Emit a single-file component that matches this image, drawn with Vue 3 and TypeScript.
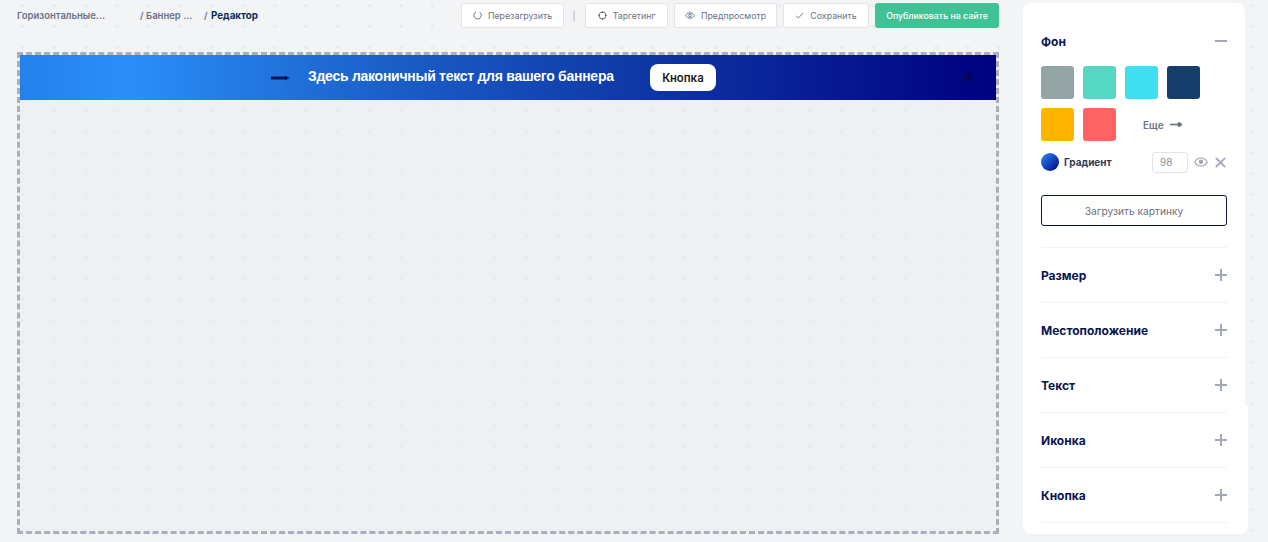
<script setup lang="ts">
const swatches: string[] = ['#95a5a6', '#55d8c1', '#3edff0', '#153e6b', '#ffb400', '#ff6363']
const sections: string[] = ['Размер', 'Местоположение', 'Текст', 'Иконка', 'Кнопка']
</script>

<template>
  <div class="page">
    <main class="workspace">
      <header class="topbar">
        <nav class="crumbs">
          <span class="crumb first">Горизонтальные...</span>
          <span class="crumb second">/ Баннер ...</span>
          <span class="crumb third">/ <b>Редактор</b></span>
        </nav>
        <div class="actions">
          <button class="btn reload">
            <svg width="9" height="9" viewBox="0 0 9 9" fill="none" stroke="#6b7186" stroke-width="1"><path d="M6.6 1.2A3.7 3.7 0 1 1 3 1" /></svg>
            Перезагрузить
          </button>
          <span class="sep"></span>
          <button class="btn target">
            <svg width="9" height="9" viewBox="0 0 9 9" fill="none" stroke="#6b7186" stroke-width="1"><circle cx="4.5" cy="4.5" r="3.5" /><path d="M4.5 0v2M4.5 7v2M0 4.5h2M7 4.5h2" /></svg>
            Таргетинг
          </button>
          <button class="btn preview">
            <svg width="10" height="9" viewBox="0 0 10 9" fill="none" stroke="#6b7186" stroke-width="1"><path d="M0.6 4.6C1.8 2.8 3.2 2 5 2S8.2 2.8 9.4 4.6C8.2 6.4 6.8 7.2 5 7.2S1.8 6.4 0.6 4.6Z" /><circle cx="5" cy="4.6" r="1.3" /><path d="M2.6 1.4 3 2M5 0.6v1M7.4 1.4 7 2" stroke-width="0.7" /></svg>
            Предпросмотр
          </button>
          <button class="btn save">
            <svg width="9" height="9" viewBox="0 0 9 9" fill="none" stroke="#6b7186" stroke-width="0.9"><path d="M1 4.8 3.4 7 8 2" /></svg>
            Сохранить
          </button>
          <button class="btn publish">Опубликовать на сайте</button>
        </div>
      </header>

      <section class="canvas">
        <div class="banner">
          <svg class="banner-arrow" width="19" height="6" viewBox="0 0 19 6"><path d="M0 1.4h14V0.4l4.6 2.6L14 5.6V4.6H0Z" fill="#0a1550" /></svg>
          <span class="banner-text">Здесь лаконичный текст для вашего баннера</span>
          <button class="banner-btn">Кнопка</button>
          <svg class="banner-close" width="10" height="10" viewBox="0 0 10 10" fill="none" stroke="#0a0a2a" stroke-width="1.6"><path d="M1 1l8 8M9 1 1 9" /></svg>
        </div>
      </section>
    </main>

    <aside class="panel">
      <div class="group open">
        <div class="group-head">
          <span>Фон</span>
          <svg width="12" height="12" viewBox="0 0 12 12" stroke="#a3a8b8" stroke-width="2"><path d="M0 6h12" /></svg>
        </div>
        <div class="swatches">
          <span v-for="c in swatches" :key="c" class="swatch" :style="{ background: c }"></span>
          <span class="more">
            Еще
            <svg width="13" height="7" viewBox="0 0 13 7"><path d="M0 2.7h7v1.6H0Z" fill="#6b7186" /><path d="M6.5 3.5 9 0.8l2 1.2 1.4 1.5L11 5l-2 1.2Z" fill="#6b7186" /></svg>
          </span>
        </div>
        <div class="gradient-row">
          <span class="ball"></span>
          <span class="gradient-label">Градиент</span>
          <span class="opacity">98</span>
          <svg class="eye" width="14" height="10" viewBox="0 0 14 10" fill="none" stroke="#a3a8b8"><path d="M0.8 5C2 2.4 4.2 1 7 1s5 1.4 6.2 4C12 7.6 9.8 9 7 9S2 7.6 0.8 5Z" stroke-width="1.2" /><circle cx="7" cy="4.8" r="2.2" fill="#a3a8b8" stroke="none" /></svg>
          <svg class="cross" width="11" height="11" viewBox="0 0 11 11" stroke="#a3a8b8" stroke-width="1.8"><path d="M0.8 0.8l9.4 9.4M10.2 0.8 0.8 10.2" /></svg>
        </div>
        <button class="upload">Загрузить картинку</button>
      </div>
      <div v-for="s in sections" :key="s" class="group">
        <div class="group-head">
          <span>{{ s }}</span>
          <svg width="12" height="12" viewBox="0 0 12 12" stroke="#a3a8b8" stroke-width="2"><path d="M0 6h12M6 0v12" /></svg>
        </div>
      </div>
    </aside>
  </div>
</template>

<style>
html,
body {
  margin: 0;
  height: 100%;
  overflow: hidden;
}
body {
  background-color: #f3f4f6;
  background-image: radial-gradient(circle, #e9ebef 1.5px, transparent 2px);
  background-size: 31.5px 21px;
  background-position: 7px -5px;
}
</style>

<style scoped>
.page {
  display: flex;
  width: 1268px;
  height: 542px;
  font-family: Inter, 'Noto Sans', sans-serif;
  color: #0a1550;
  box-sizing: border-box;
}
.workspace {
  width: 1023px;
  padding: 3px 24px 0 17px;
  box-sizing: border-box;
}
.topbar {
  display: flex;
  align-items: center;
  justify-content: space-between;
  height: 25px;
  margin-bottom: 24px;
}
.crumbs {
  display: flex;
  font-size: 9.5px;
  font-weight: 600;
  color: #6b7186;
}
.crumb.first {
  width: 123px;
}
.crumb.second {
  width: 64px;
}
.crumb b {
  margin-left: 1px;
  font-size: 9.8px;
  font-weight: 700;
  color: #0a2a5e;
}
.actions {
  display: flex;
  align-items: center;
  gap: 6px;
}
.btn {
  display: flex;
  align-items: center;
  justify-content: center;
  gap: 6px;
  height: 25px;
  padding: 0;
  background: #fff;
  border: 1px solid #e2e4ea;
  border-radius: 3px;
  font-family: inherit;
  font-size: 8.8px;
  color: #6b7186;
}
.reload {
  width: 103px;
}
.target {
  width: 83px;
}
.preview {
  width: 103px;
}
.save {
  width: 86px;
}
.sep {
  width: 2px;
  height: 10px;
  margin: 0 4px 0 3px;
  background: #d3d6de;
}
.publish {
  width: 124px;
  border: none;
  background: #41c295;
  color: #fff;
  font-weight: 500;
}
.canvas {
  height: 482px;
  box-sizing: border-box;
  border: 3px dashed #abaebb;
  background: rgba(232, 234, 242, 0.45);
}
.banner {
  display: flex;
  align-items: center;
  position: relative;
  height: 45px;
  padding-left: 251px;
  background: linear-gradient(90deg, #2580ea 0%, #2a8ffa 11%, #1b5ec8 38%, #0f3aa8 62%, #000080 100%);
  color: #fff;
}
.banner-arrow {
  margin-right: 18px;
}
.banner-text {
  width: 342px;
  padding-bottom: 3px;
  font-family: 'Liberation Sans', Roboto, sans-serif;
  font-size: 14px;
  font-weight: 700;
  letter-spacing: -0.27px;
}
.banner-btn {
  width: 66px;
  height: 27px;
  padding: 0;
  border: none;
  border-radius: 8px;
  background: #fff;
  font-family: Roboto, 'Liberation Sans', sans-serif;
  font-size: 12px;
  font-weight: 500;
  color: #111;
}
.banner-close {
  position: absolute;
  right: 23px;
  top: 17px;
}
.panel {
  position: relative;
  isolation: isolate;
  width: 225px;
  height: 531px;
  margin-top: 3px;
  padding: 0 21px 0 18px;
  box-sizing: border-box;
}
/* the white sheet is narrower above y=405 */
.panel::before,
.panel::after {
  content: '';
  position: absolute;
  left: 0;
  z-index: -1;
  background: #fff;
}
.panel::before {
  top: 0;
  width: 222px;
  height: 402px;
  border-radius: 8px 8px 0 0;
}
.panel::after {
  top: 402px;
  bottom: 0;
  width: 225px;
  border-radius: 0 0 8px 8px;
}
.group {
  height: 55px;
  box-sizing: border-box;
  border-bottom: 1px solid #f1f2f5;
  display: flex;
  flex-direction: column;
}
.group.open {
  height: 245px;
  padding-top: 28px;
}
.group-head {
  display: flex;
  align-items: center;
  justify-content: space-between;
  flex: 0 0 auto;
  height: 20px;
  margin-top: 17px;
  font-size: 12px;
  font-weight: 700;
  color: #0a1550;
}
.group.open .group-head {
  margin-top: 0;
}
.swatches {
  display: grid;
  grid-template-columns: repeat(4, 33px);
  grid-auto-rows: 33px;
  gap: 9px;
  margin-top: 15px;
}
.swatch {
  border-radius: 3px;
}
.more {
  grid-column: span 2;
  display: flex;
  align-items: center;
  gap: 6px;
  padding-left: 18px;
  font-size: 10px;
  font-weight: 600;
  color: #6b7186;
}
.gradient-row {
  display: flex;
  align-items: center;
  height: 20px;
  margin-top: 11px;
}
.ball {
  width: 18px;
  height: 18px;
  border-radius: 50%;
  background: linear-gradient(135deg, #2a8ffa, #000080);
}
.gradient-label {
  margin-left: 5px;
  width: 88px;
  font-size: 10px;
  font-weight: 700;
  color: #333a55;
}
.opacity {
  width: 36px;
  height: 21px;
  box-sizing: border-box;
  padding-left: 7px;
  border: 1px solid #e2e4ea;
  border-radius: 3px;
  font-size: 10px;
  color: #8a90a2;
  line-height: 19px;
}
.eye {
  margin-left: 6px;
}
.cross {
  margin-left: 7px;
}
.upload {
  height: 31px;
  margin-top: 23px;
  padding: 0;
  background: #fff;
  border: 1px solid #0a1550;
  border-radius: 3px;
  font-family: inherit;
  font-size: 10.2px;
  color: #6b7186;
}
</style>
